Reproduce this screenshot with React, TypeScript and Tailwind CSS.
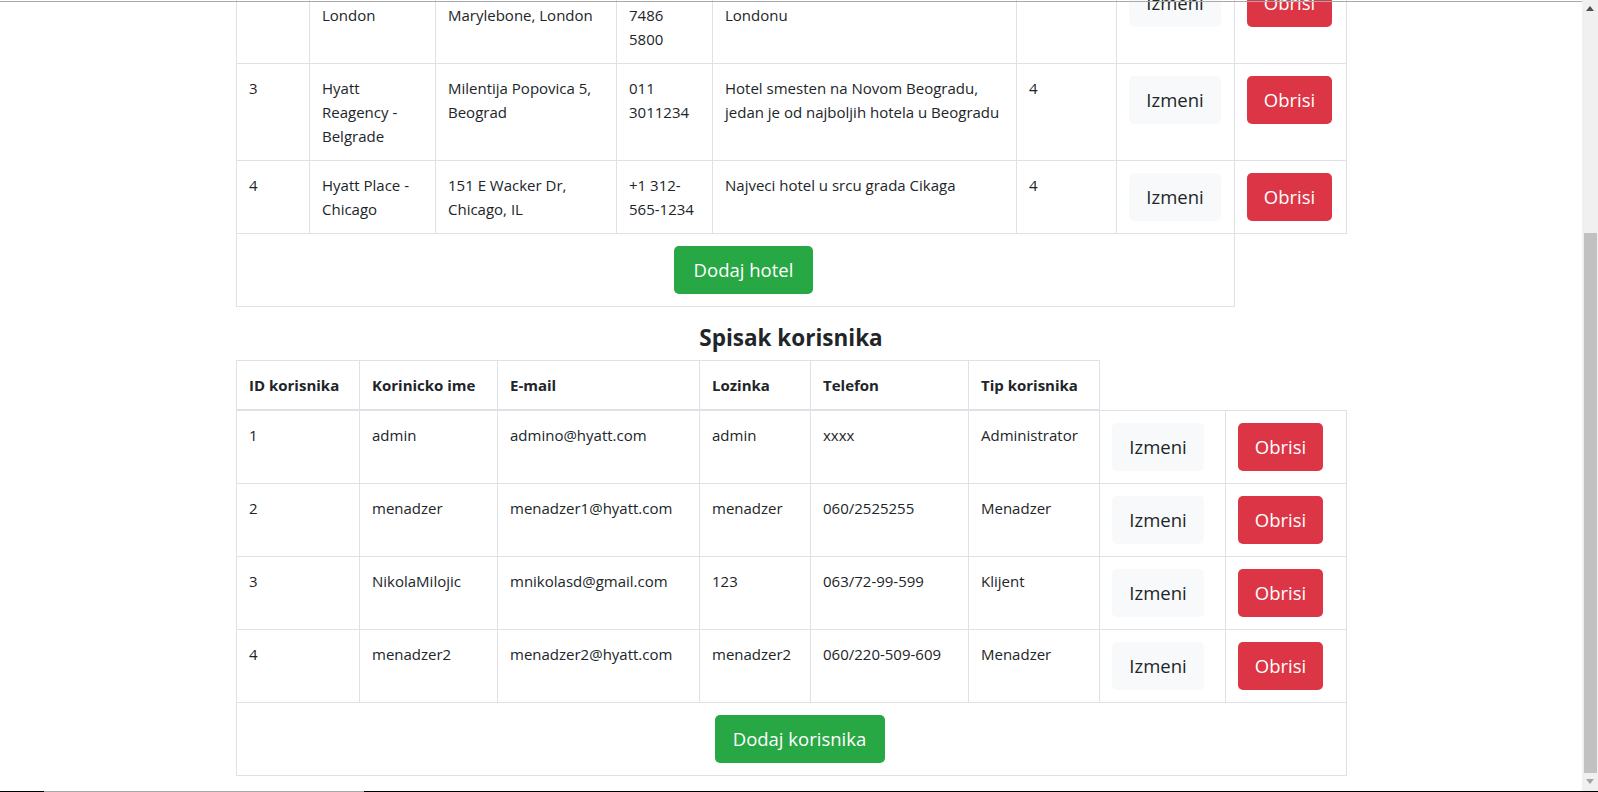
import React from "react";

type Hotel = {
  id: string;
  name: string[];
  address: string[];
  phone: string[];
  desc: string[];
  stars: string;
};

const hotels: Hotel[] = [
  {
    id: "2",
    name: ["The Churchill", "London"],
    address: ["30 Portman St", "Marylebone, London"],
    phone: ["+44 20", "7486", "5800"],
    desc: ["Hotel u centru", "Londonu"],
    stars: "5",
  },
  {
    id: "3",
    name: ["Hyatt", "Reagency -", "Belgrade"],
    address: ["Milentija Popovica 5,", "Beograd"],
    phone: ["011", "3011234"],
    desc: ["Hotel smesten na Novom Beogradu,", "jedan je od najboljih hotela u Beogradu"],
    stars: "4",
  },
  {
    id: "4",
    name: ["Hyatt Place -", "Chicago"],
    address: ["151 E Wacker Dr,", "Chicago, IL"],
    phone: ["+1 312-", "565-1234"],
    desc: ["Najveci hotel u srcu grada Cikaga"],
    stars: "4",
  },
];

const users = [
  ["1", "admin", "admino@hyatt.com", "admin", "xxxx", "Administrator"],
  ["2", "menadzer", "menadzer1@hyatt.com", "menadzer", "060/2525255", "Menadzer"],
  ["3", "NikolaMilojic", "mnikolasd@gmail.com", "123", "063/72-99-599", "Klijent"],
  ["4", "menadzer2", "menadzer2@hyatt.com", "menadzer2", "060/220-509-609", "Menadzer"],
];

const userHeaders = ["ID korisnika", "Korinicko ime", "E-mail", "Lozinka", "Telefon", "Tip korisnika"];

const td = "border border-[#dee2e6] p-3 align-top";

const Lines = ({ lines }: { lines: string[] }) => (
  <>
    {lines.map((l, i) => (
      <div key={i} className="whitespace-nowrap">
        {l}
      </div>
    ))}
  </>
);

const EditBtn = () => (
  <button className="w-[92px] h-[48px] rounded-[5px] bg-[#f8f9fa] text-[18.5px] leading-[30px] text-[#212529]">
    Izmeni
  </button>
);

const DeleteBtn = () => (
  <button className="w-[85px] h-[48px] rounded-[5px] bg-[#dc3545] text-[18.5px] leading-[30px] text-white">
    Obrisi
  </button>
);

const Scrollbar = () => (
  <div className="w-4 h-full bg-[#f0f0f0] flex flex-col items-center shrink-0">
    <div className="h-[17px] w-full flex items-center justify-center">
      <svg width="8" height="5" viewBox="0 0 8 5">
        <path d="M0 5 L4 0 L8 5 Z" fill="#505050" />
      </svg>
    </div>
    <div className="mt-[216px] h-[540px] w-[13px] bg-[#c1c1c1]" />
    <div className="h-[17px] w-full flex items-center justify-center">
      <svg width="8" height="5" viewBox="0 0 8 5">
        <path d="M0 0 L8 0 L4 5 Z" fill="#a3a3a3" />
      </svg>
    </div>
  </div>
);

export default function App() {
  return (
    <div className="relative h-[792px] w-full overflow-hidden flex bg-white text-[#212529] font-['Open_Sans',sans-serif]">
      <div className="flex-1 overflow-hidden">
        <div className="w-[1110px] mx-auto -mt-[34px]">
          <table className="w-[1110px] table-fixed border-collapse text-[15px] leading-6 mb-4">
            <colgroup>
              <col className="w-[73px]" />
              <col className="w-[126px]" />
              <col className="w-[181px]" />
              <col className="w-[96px]" />
              <col className="w-[304px]" />
              <col className="w-[100px]" />
              <col className="w-[118px]" />
              <col className="w-[112px]" />
            </colgroup>
            <tbody>
              {hotels.map((h) => (
                <tr key={h.id}>
                  <td className={td}>{h.id}</td>
                  <td className={td}>
                    <Lines lines={h.name} />
                  </td>
                  <td className={td}>
                    <Lines lines={h.address} />
                  </td>
                  <td className={td}>
                    <Lines lines={h.phone} />
                  </td>
                  <td className={td}>
                    <Lines lines={h.desc} />
                  </td>
                  <td className={td}>{h.stars}</td>
                  <td className={td}>
                    <EditBtn />
                  </td>
                  <td className={td}>
                    <DeleteBtn />
                  </td>
                </tr>
              ))}
              <tr>
                <td colSpan={7} className={td}>
                  <div className="flex justify-center pl-4">
                    <button className="w-[139px] h-[48px] rounded-[5px] bg-[#28a745] text-[18.5px] leading-[30px] text-white">
                      Dodaj hotel
                    </button>
                  </div>
                </td>
              </tr>
            </tbody>
          </table>

          <h4 className="text-center text-[22.5px] leading-[29px] font-bold mb-2">Spisak korisnika</h4>

          <table className="w-[1110px] table-fixed border-collapse text-[15px] leading-6">
            <colgroup>
              <col className="w-[123px]" />
              <col className="w-[138px]" />
              <col className="w-[202px]" />
              <col className="w-[111px]" />
              <col className="w-[158px]" />
              <col className="w-[131px]" />
              <col className="w-[126px]" />
              <col className="w-[121px]" />
            </colgroup>
            <thead>
              <tr>
                {userHeaders.map((h) => (
                  <th
                    key={h}
                    className="border border-[#dee2e6] border-b-2 p-3 text-left align-bottom font-bold whitespace-nowrap"
                  >
                    {h}
                  </th>
                ))}
              </tr>
            </thead>
            <tbody>
              {users.map((u) => (
                <tr key={u[0]}>
                  {u.map((c, i) => (
                    <td key={i} className={td + " whitespace-nowrap"}>
                      {c}
                    </td>
                  ))}
                  <td className={td}>
                    <EditBtn />
                  </td>
                  <td className={td}>
                    <DeleteBtn />
                  </td>
                </tr>
              ))}
              <tr>
                <td colSpan={8} className={td}>
                  <div className="flex justify-center pl-4">
                    <button className="w-[170px] h-[48px] rounded-[5px] bg-[#28a745] text-[18.5px] leading-[30px] text-white">
                      Dodaj korisnika
                    </button>
                  </div>
                </td>
              </tr>
            </tbody>
          </table>
        </div>
      </div>
      <Scrollbar />
      <div className="absolute top-px left-0 right-4 h-px bg-[#a9a9a9]" />
      <div className="absolute bottom-0 left-0 right-0 h-px bg-black flex">
        <div className="ml-[44px] w-[320px] h-px bg-[#a8a8a8]" />
      </div>
    </div>
  );
}
